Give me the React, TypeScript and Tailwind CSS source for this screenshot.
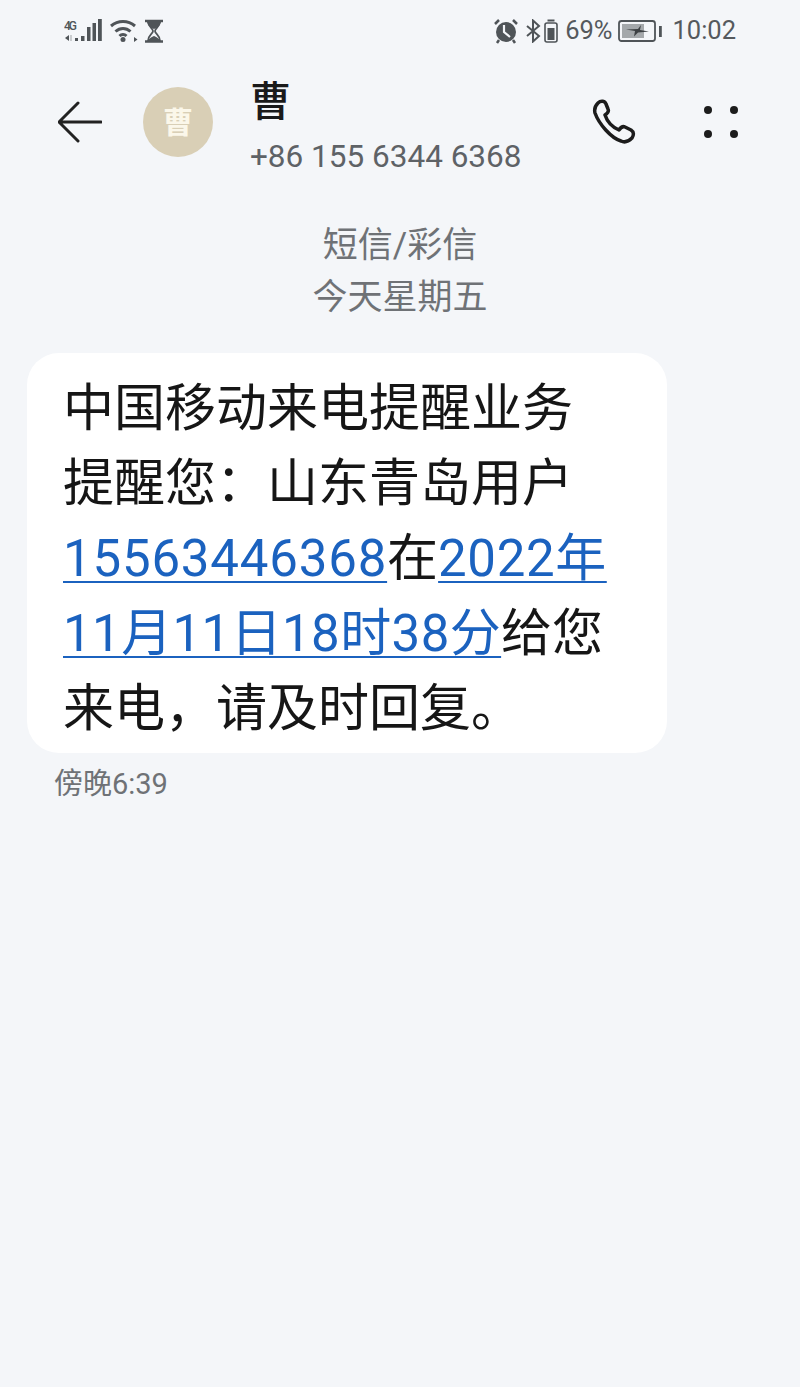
const cjk = "font-['Roboto','Noto_Sans_CJK_SC',sans-serif]";

const SignalIcon = () => (
  <svg width="39" height="26" viewBox="0 0 39 26" className="text-[#4f5458]">
    <text x="0" y="12" fontSize="12" fontFamily="Roboto" fontWeight="500" fill="currentColor" textLength="13">4G</text>
    <path d="M1 20l4-3v6z" fill="currentColor" />
    <path d="M7 17v6" stroke="currentColor" strokeWidth="1" opacity="0.5" />
    <rect x="11" y="20" width="3" height="3" fill="currentColor" />
    <rect x="17" y="18" width="3.500" height="5" fill="currentColor" />
    <rect x="23" y="9" width="3.500" height="14" fill="currentColor" />
    <rect x="28.500" y="5" width="3.500" height="18" fill="currentColor" />
    <rect x="34" y="1" width="3.800" height="22" fill="currentColor" />
  </svg>
);

const WifiIcon = () => (
  <svg width="30" height="26" viewBox="0 0 30 26" fill="none" stroke="#4f5458" strokeWidth="3">
    <path d="M2 8C9 2 19 2 26 8" />
    <path d="M6.500 13.500C11 9.500 17 9.500 21.500 13.500" />
    <path d="M10.500 18C12.500 16 15.500 16 17.500 18" />
    <circle cx="14" cy="21.500" r="2.500" fill="#4f5458" stroke="none" />
    <path d="M25 19l3.500 2.500-3.500 2.500z" fill="#4f5458" stroke="none" />
  </svg>
);

const HourglassIcon = () => (
  <svg width="18" height="24" viewBox="0 0 18 24" fill="none" stroke="#4f5458" strokeWidth="1.800">
    <path d="M0 2h18M0 22.500h18" strokeWidth="2.500" />
    <path d="M3 2c0 6 5 7 5 10s-5 4-5 10M15 2c0 6-5 7-5 10s5 4 5 10" />
    <path d="M2 2h14c0 4-4 7-7 8-3-1-7-4-7-8zM3 22c1-3 4-4 6-5 2 1 5 2 6 5z" fill="#4f5458" stroke="none" />
  </svg>
);

const AlarmIcon = () => (
  <svg width="24" height="26" viewBox="0 0 24 26">
    <circle cx="12" cy="14" r="10" fill="#4f5458" />
    <path d="M1 6l4-4M23 6l-4-4M5 22l-2 3M19 22l2 3" stroke="#4f5458" strokeWidth="2.500" />
    <path d="M10 7v7l6 5" fill="none" stroke="#f4f6f9" strokeWidth="2.200" />
  </svg>
);

const BluetoothIcon = () => (
  <svg width="15" height="24" viewBox="0 0 15 24" fill="none" stroke="#4f5458" strokeWidth="2">
    <path d="M1 7l12 10-6 5.500V1.500l6 5.500-12 10" />
  </svg>
);

const SmallBattery = () => (
  <svg width="14" height="24" viewBox="0 0 14 24" fill="none">
    <rect x="3.500" y="0.500" width="7" height="2" fill="#4f5458" />
    <rect x="1" y="4" width="12" height="19" rx="2" stroke="#4f5458" strokeWidth="1.600" />
    <rect x="3.500" y="9" width="7" height="12" fill="#4f5458" />
  </svg>
);

const ChargeBattery = () => (
  <svg width="44" height="24" viewBox="0 0 44 24" fill="none">
    <rect x="1" y="2" width="36" height="20" rx="2.500" stroke="#4f5458" strokeWidth="1.800" />
    <rect x="4" y="5" width="22" height="14" fill="#a4a8ab" />
    <path d="M8 10.500l12-.5 3-4-1 5 9 1.500-11 1-4 4 1-5.500z" fill="#3d4144" />
    <rect x="41" y="7" width="2.800" height="11" fill="#4f5458" />
  </svg>
);

export default function App() {
  return (
    <div className={`min-h-[1387px] w-full bg-[#f4f6f9] ${cjk} overflow-hidden`}>
      {/* status bar */}
      <div className="flex h-[62px] items-center justify-between pl-[64px] pr-[64px]">
        <div className="flex items-center gap-[6px]">
          <SignalIcon />
          <WifiIcon />
          <HourglassIcon />
        </div>
        <div className="flex items-center text-[25.500px] text-[#55595d]">
          <AlarmIcon />
          <div className="ml-[8px]"><BluetoothIcon /></div>
          <div className="ml-[3px]"><SmallBattery /></div>
          <span className="ml-[7px] leading-none">69%</span>
          <div className="ml-[6px]"><ChargeBattery /></div>
          <span className="ml-[10px] leading-none">10:02</span>
        </div>
      </div>

      {/* header */}
      <div className="flex h-[120px] items-center pl-[58px] pr-[62px]">
        <svg width="44" height="44" viewBox="0 0 44 44" fill="none" stroke="#222" strokeWidth="3" strokeLinecap="round">
          <path d="M1 22h42M20 3L2 21M20 41L2 23" />
        </svg>
        <div className="ml-[41px] flex h-[70px] w-[70px] items-center justify-center rounded-full bg-[#d9cfb6] text-[30px] font-bold text-[#fbf7ea]">曹</div>
        <div className="ml-[37px] mt-[9px] flex-1">
          <div className="text-[41px] leading-[50px] font-medium text-[#1a1a1a]">曹</div>
          <div className="mt-[11px] text-[31.500px] leading-[38px] text-[#5e6266]">+86 155 6344 6368</div>
        </div>
        <svg width="48" height="48" viewBox="0 0 48 48" fill="none" stroke="#1c1c1c" strokeWidth="3.500" strokeLinejoin="round" className="mr-[64px]">
          <path d="M6 5c3-3 7-2 8 1l2 5c1 2 0 4-3 6 2 6 7 12 14 15 2-3 4-4 6-3l6 3c3 2 3 5 1 8-3 3-7 5-11 3C19 40 7 26 3 15c-1-4 0-7 3-10z" />
        </svg>
        <div className="grid grid-cols-2 gap-x-[18px] gap-y-[16px]">
          <span className="h-[8px] w-[8px] rounded-full bg-[#1c1c1c]" />
          <span className="h-[8px] w-[8px] rounded-full bg-[#1c1c1c]" />
          <span className="h-[8px] w-[8px] rounded-full bg-[#1c1c1c]" />
          <span className="h-[8px] w-[8px] rounded-full bg-[#1c1c1c]" />
        </div>
      </div>

      {/* date */}
      <div className="mt-[38px] text-center text-[35px] leading-[52px] text-[#6f7276]">
        <div>短信/彩信</div>
        <div>今天星期五</div>
      </div>

      {/* message */}
      <div className="mt-[29px] ml-[27px] w-[640px] rounded-[32px] bg-white pt-[18px] pr-[30px] pb-[7px] pl-[36px] text-[51px] leading-[75px] text-[#161616]">
        <div>中国移动来电提醒业务</div>
        <div>提醒您：山东青岛用户</div>
        <div>
          <a className="text-[#1b62bf] tracking-[0.8px] underline decoration-2 underline-offset-[5px]">15563446368</a>在<a className="text-[#1b62bf] tracking-[0.6px] underline decoration-2 underline-offset-[5px]">2022年</a>
        </div>
        <div>
          <a className="text-[#1b62bf] tracking-[0.4px] underline decoration-2 underline-offset-[5px]">11月11日18时38分</a>给您
        </div>
        <div>来电，请及时回复。</div>
      </div>
      <div className="mt-[14px] ml-[54px] text-[29px] leading-[34px] text-[#6f7276]">傍晚6:39</div>
    </div>
  );
}
